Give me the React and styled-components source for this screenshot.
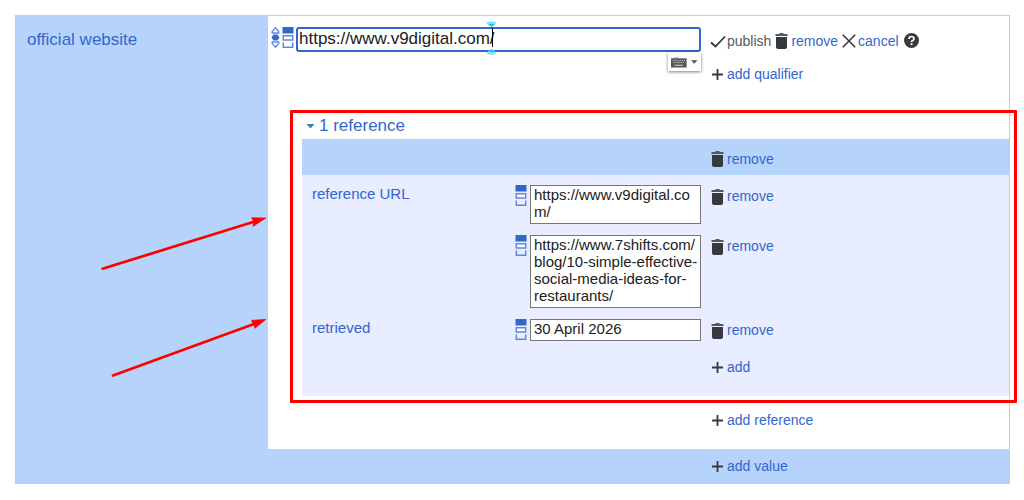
import React, { useState } from 'react'
import styled, { createGlobalStyle } from "styled-components";

const GlobalStyle = createGlobalStyle`
  * {
    box-sizing: border-box;
  }
  body {
    margin: 0;
    background: #fff;
    color: #202122;
    font-family: "Liberation Sans", Arial, sans-serif;
  }
`;

const Page = styled.main`
  padding: 15px 14px 15px 15px;
`;

const Card = styled.section`
  border: 1px solid #c8ccd1;
  background: #b6d4fb;
`;

const Statement = styled.div`
  display: flex;
`;

const PropertyCell = styled.div`
  position: relative;
  flex: none;
  width: 252px;
  padding: 13px 11px;
`;

const PropertyLink = styled.a`
  color: #36c;
  font-size: 17px;
  line-height: 22px;
  text-decoration: none;
`;

const Arrows = styled.svg`
  position: absolute;
  left: 80px;
  top: 192px;
`;

const Body = styled.div`
  flex: 1;
  min-width: 0;
  background: #fff;
`;

const MainSnak = styled.div`
  display: flex;
  padding: 8px 0 20px 3px;
`;

const Indicators = styled.div`
  display: flex;
  flex: none;
  gap: 2px;
  padding: 3px 2px 0 0;
`;

const Field = styled.div`
  position: relative;
  flex: 1;
  min-width: 0;
  margin-right: 8px;
  padding-top: 3px;
`;

const ValueInput = styled.input`
  display: block;
  width: 100%;
  height: 25px;
  padding: 0 1px 2px;
  border: 2px solid #36c;
  border-radius: 3px;
  outline: none;
  background: #fff;
  color: #202122;
  font: 17px "Liberation Sans", Arial, sans-serif;
`;

const Caret = styled.svg`
  position: absolute;
  left: 190px;
  top: -4px;
`;

const ImeButton = styled.button`
  position: absolute;
  right: 0;
  top: 28px;
  display: flex;
  align-items: center;
  gap: 4px;
  width: 33px;
  height: 19px;
  padding: 0 3px;
  border: 0;
  background: #fff;
  box-shadow: 0 1px 3px rgba(0, 0, 0, 0.5);
`;

const Actions = styled.div`
  flex: none;
  width: 300px;
`;

const ActionRow = styled.div`
  display: flex;
  align-items: center;
  gap: 2px;
  height: ${(props) => props.$height || "33px"};
`;

const ActionButton = styled.button`
  display: flex;
  align-items: center;
  gap: 1px;
  padding: 0;
  border: 0;
  background: none;
  color: ${(props) => (props.$muted ? "#54595d" : "#36c")};
  font: 14px/20px "Liberation Sans", Arial, sans-serif;
  cursor: pointer;
`;

const IconBox = styled.span`
  display: flex;
  justify-content: center;
  width: 17px;
  padding-top: 1px;
`;

const HelpButton = styled.button`
  display: flex;
  margin-left: 3px;
  padding: 0;
  border: 0;
  background: none;
`;

const References = styled.section`
  position: relative;
  margin-left: 34px;
`;

const Highlight = styled.div`
  position: absolute;
  inset: 0 -8px -7px -12px;
  border: 3px solid #fe0000;
  border-radius: 1px;
  pointer-events: none;
`;

const Toggle = styled.button`
  display: flex;
  align-items: center;
  gap: 4px;
  padding: 3px 0 0 4px;
  border: 0;
  background: none;
  color: #36c;
  font: 17px/26px "Liberation Sans", Arial, sans-serif;
`;

const ReferenceHead = styled.div`
  display: flex;
  justify-content: flex-end;
  padding: 3px 0 0;
  height: 36px;
  background: #b6d4fb;
`;

const ReferenceBody = styled.div`
  padding: 10px 0 18px;
  background: #e8edff;
`;

const SnakGroup = styled.div`
  display: flex;
  margin-bottom: 11px;
`;

const SnakProperty = styled.div`
  flex: 1;
  padding-left: 10px;
  line-height: 17px;

  a {
    color: #36c;
    font-size: 15px;
    text-decoration: none;
  }
`;

const SnakList = styled.div`
  display: flex;
  flex-direction: column;
  gap: 11px;
`;

const Snak = styled.div`
  display: flex;
`;

const SnakInput = styled.textarea`
  display: block;
  width: 171px;
  margin: 0 8px 0 3px;
  padding: 0 0 3px 3px;
  border: 1px solid #72777d;
  outline: none;
  resize: none;
  overflow: hidden;
  background: #fff;
  color: #202122;
  font: 15px/17px "Liberation Sans", Arial, sans-serif;
`;

const AddRow = styled.div`
  display: flex;
  justify-content: flex-end;
  padding: ${(props) => props.$padding};
`;

const Svg = ({ w, h, children }) => (
  <svg width={w} height={h} viewBox={`0 0 ${w} ${h}`} aria-hidden="true">{children}</svg>
);

const icons = {
  trash: (
    <Svg w={13} h={16}>
      <path d="M4.5 0h4v1h4v2H.5V1h4z" fill="#54595d" />
      <path d="M1 4h11v10a2 2 0 0 1-2 2H3a2 2 0 0 1-2-2z" fill="#37393d" />
    </Svg>
  ),
  check: (
    <Svg w={16} h={13}>
      <path d="M1 7.5 5.500 11.5 15 1.5" fill="none" stroke="#37393d" strokeWidth="1.8" />
    </Svg>
  ),
  close: (
    <Svg w={14} h={14}>
      <path d="M.8.8l12.4 12.4M13.200.8.8 13.2" fill="none" stroke="#37393d" strokeWidth="1.6" />
    </Svg>
  ),
  add: (
    <Svg w={11} h={11}>
      <path d="M5.5 0v11M0 5.5h11" fill="none" stroke="#37393d" strokeWidth="1.8" />
    </Svg>
  ),
};

const SnakTypeIcon = () => (
  <Svg w={12} h={21}>
    <path d="M.5 0h11v6.500H.5z" fill="#36c" />
    <path d="M1.300 8.700h9.400v4.200H1.300z" fill="#fff" stroke="#6288dc" strokeWidth="1.5" />
    <path d="M1.300 15.500v4.700h9.400v-4.700" fill="none" stroke="#6288dc" strokeWidth="1.5" />
  </Svg>
);

const RankIcon = () => (
  <Svg w={9} h={21}>
    <path d="M4.5.8 7.8 4.500v1.500H1.200V4.500z" fill="#fff" stroke="#6288dc" strokeWidth="1.3" />
    <path d="M2.500 7.500h4L8.500 10.500l-2 3h-4l-2-3z" fill="#36c" />
    <path d="M4.5 20.2 7.8 16.500V15H1.200v1.500z" fill="#fff" stroke="#6288dc" strokeWidth="1.3" />
  </Svg>
);

const Action = ({ icon, children, muted }) => (
  <ActionButton type="button" $muted={muted}>
    <IconBox>{icons[icon]}</IconBox>
    {children}
  </ActionButton>
);

const groups = [
  {
    property: "reference URL",
    values: [
      { text: "https://www.v9digital.com/", rows: 2 },
      { text: "https://www.7shifts.com/blog/10-simple-effective-social-media-ideas-for-restaurants/", rows: 4 },
    ],
  },
  { property: "retrieved", values: [{ text: "30 April 2026", rows: 1 }] },
];

const App = () => {
    const [website, setWebsite] = useState("https://www.v9digital.com/");
    const [open, setOpen] = useState(true);

  return (
    <Page>
      <GlobalStyle />
      <Card>
        <Statement>
          <PropertyCell>
            <PropertyLink href="#website">official website</PropertyLink>
            <Arrows width="180" height="175" viewBox="96 208 180 175" aria-hidden="true">
              <g stroke="#fe0000" strokeWidth="2.7" strokeLinecap="round">
                <path d="M102.5 268.7 254 221.8" />
                <path d="M113 375.5 254 323.9" />
              </g>
              <path d="M266 218 251.5 217.700l2 3.800-.5 4.900zM266 319.3l-14.500 1 1.500 3.400 2 4.600z" fill="#fe0000" stroke="#fe0000" strokeWidth=".6" />
            </Arrows>
          </PropertyCell>
          <Body>
            <MainSnak>
              <Indicators>
                <RankIcon />
                <SnakTypeIcon />
              </Indicators>
              <Field>
                <ValueInput
                  aria-label="official website"
                  value={website}
                  onChange={(event) => setWebsite(event.target.value)}
                />
                <Caret width="12" height="36" viewBox="0 0 12 36" aria-hidden="true">
                  <path d="M.5 2.500Q5 0 10 2.500 9.500 5 5.500 7 1 5 .5 2.500zM.5 33.500Q2 30.500 5.500 29 9 30.500 10 33.500 5 36 .5 33.500z" fill="#7fe0fb" />
                  <path d="M2.500 4h6l-3 3zM2.500 32h6l-3-3z" fill="#12c4f8" />
                  <path d="M6.500 8v19" stroke="#000" />
                </Caret>
                <ImeButton type="button" aria-label="Input method">
                  <Svg w={17} h={12}>
                    <path d="M2 3Q2 1.500 4 1.500h2Q8 1.500 8 0" fill="none" stroke="#999" />
                    <path d="M0 2h17v10H0z" fill="#54595d" />
                    <path d="M2 4.500h13M3 6.500h12" stroke="#ddd" strokeDasharray="1 1" />
                    <path d="M4 9.500h9" stroke="#ddd" />
                  </Svg>
                  <Svg w={8} h={4}>
                    <path d="M0 0h7L3.5 4z" fill="#54595d" />
                  </Svg>
                </ImeButton>
              </Field>
              <Actions>
                <ActionRow>
                  <Action icon="check" muted>publish</Action>
                  <Action icon="trash">remove</Action>
                  <Action icon="close">cancel</Action>
                  <HelpButton type="button" aria-label="Help">
                    <Svg w={15} h={15}>
                      <circle cx="7.5" cy="7.5" r="7.5" fill="#37393d" />
                      <path d="M5 6Q5 3.500 7.500 3.500T10 5.800Q10 7 8.500 7.600 7.500 8 7.500 9.300" fill="none" stroke="#fff" strokeWidth="1.7" />
                      <path d="M6.600 10.300h1.900v1.800H6.600z" fill="#fff" />
                    </Svg>
                  </HelpButton>
                </ActionRow>
                <ActionRow>
                  <Action icon="add">add qualifier</Action>
                </ActionRow>
              </Actions>
            </MainSnak>

            <References>
              <Toggle type="button" aria-expanded={open} onClick={() => setOpen(!open)}>
                <Svg w={9} h={5}>
                  <path d="M.5 0h8l-4 4.500z" fill="#3a7cb8" />
                </Svg>
                1 reference
              </Toggle>
              {open && (
                <>
                  <ReferenceHead>
                    <Actions>
                      <ActionRow>
                        <Action icon="trash">remove</Action>
                      </ActionRow>
                    </Actions>
                  </ReferenceHead>
                  <ReferenceBody>
                    {groups.map((group) => (
                      <SnakGroup key={group.property}>
                        <SnakProperty><a href="#property">{group.property}</a></SnakProperty>
                        <SnakList>
                          {group.values.map(({ text, rows }) => (
                            <Snak key={text}>
                              <SnakTypeIcon />
                              <SnakInput aria-label={group.property} rows={rows} defaultValue={text} spellCheck={false} />
                              <Actions>
                                <ActionRow $height="22px">
                                  <Action icon="trash">remove</Action>
                                </ActionRow>
                              </Actions>
                            </Snak>
                          ))}
                        </SnakList>
                      </SnakGroup>
                    ))}
                    <AddRow $padding="4px 0 0">
                      <Actions>
                        <ActionRow $height="22px">
                          <Action icon="add">add</Action>
                        </ActionRow>
                      </Actions>
                    </AddRow>
                  </ReferenceBody>
                </>
              )}
              <Highlight />
            </References>

            <AddRow $padding="13px 0 18px">
              <Actions>
                <ActionRow $height="22px">
                  <Action icon="add">add reference</Action>
                </ActionRow>
              </Actions>
            </AddRow>
          </Body>
        </Statement>
        <AddRow $padding="6px 0">
          <Actions>
            <ActionRow $height="22px">
              <Action icon="add">add value</Action>
            </ActionRow>
          </Actions>
        </AddRow>
      </Card>
    </Page>
  );
};


export default App;
